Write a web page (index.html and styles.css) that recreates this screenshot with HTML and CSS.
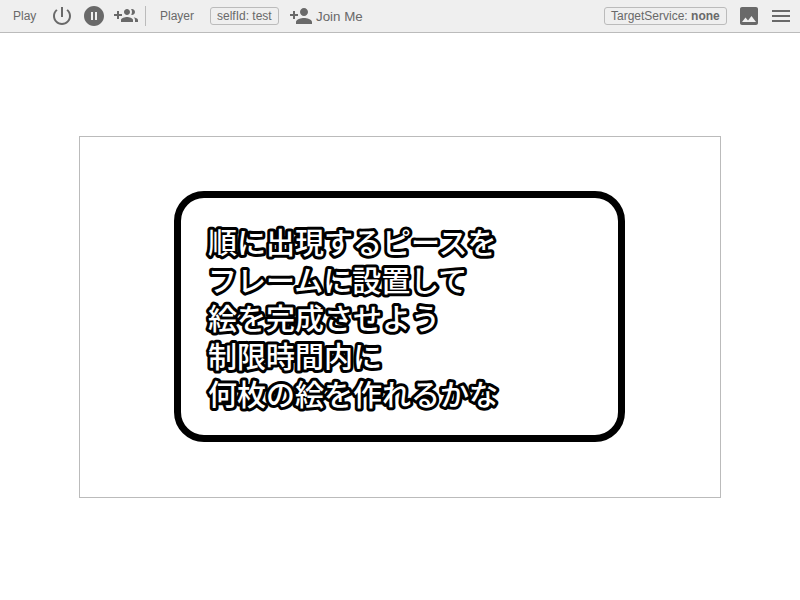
FILE: index.html
```html
<!DOCTYPE html>
<html lang="ja">
<head>
<meta charset="utf-8">
<title>Play</title>
<link rel="stylesheet" href="styles.css">
</head>
<body>
<header class="toolbar">
  <span class="label label-play">Play</span>
  <svg class="icon icon-power" viewBox="0 0 24 24"><path d="M13 3h-2v10h2V3zm4.83 2.17l-1.42 1.42C17.99 7.86 19 9.81 19 12c0 3.87-3.13 7-7 7s-7-3.13-7-7c0-2.19 1.01-4.14 2.58-5.42L6.17 5.17C4.23 6.82 3 9.26 3 12c0 4.97 4.03 9 9 9s9-4.03 9-9c0-2.74-1.23-5.18-3.17-6.83z"/></svg>
  <svg class="icon icon-pause" viewBox="0 0 24 24"><path d="M12 2C6.48 2 2 6.48 2 12s4.48 10 10 10 10-4.48 10-10S17.52 2 12 2zm-1 14H9V8h2v8zm4 0h-2V8h2v8z"/></svg>
  <svg class="icon icon-group" viewBox="0 0 24 24"><path d="M8 10H5V7H3v3H0v2h3v3h2v-3h3v-2zm10 1c1.66 0 2.99-1.34 2.99-3S19.66 5 18 5c-.32 0-.63.05-.91.14.57.81.9 1.79.9 2.86s-.34 2.04-.9 2.86c.28.09.59.14.91.14zm-5 0c1.66 0 2.99-1.34 2.99-3S14.66 5 13 5c-1.66 0-3 1.34-3 3s1.34 3 3 3zm6.62 2.16c.83.73 1.38 1.66 1.38 2.84v2h3v-2c0-1.54-2.37-2.49-4.38-2.84zM13 13c-2 0-6 1-6 3v2h12v-2c0-2-4-3-6-3z"/></svg>
  <span class="divider"></span>
  <span class="label label-player">Player</span>
  <span class="tag tag-self">selfId: test</span>
  <button class="join" type="button">
    <svg class="icon" viewBox="0 0 24 24"><path d="M15 12c2.21 0 4-1.79 4-4s-1.79-4-4-4-4 1.79-4 4 1.79 4 4 4zm-9-2V7H4v3H1v2h3v3h2v-3h3v-2H6zm9 4c-2.67 0-8 1.34-8 4v2h16v-2c0-2.66-5.33-4-8-4z"/></svg>
    <span class="join-text">Join Me</span>
  </button>
  <div class="right">
    <span class="tag tag-service">TargetService: <b>none</b></span>
    <svg class="icon icon-image" viewBox="0 0 24 24"><path d="M21 19V5c0-1.100-.9-2-2-2H5c-1.100 0-2 .9-2 2v14c0 1.100.9 2 2 2h14c1.100 0 2-.9 2-2zM8.500 13.500l2.500 3.010L14.500 12l4.500 6H5l3.500-4.500z"/></svg>
    <svg class="icon" viewBox="0 0 24 24"><path d="M3 18h18v-2H3v2zm0-5h18v-2H3v2zm0-7v2h18V6H3z"/></svg>
  </div>
</header>
<main class="stage">
  <div class="screen">
    <div class="panel">
      <svg class="message" viewBox="0 0 320 200">
        <text x="5" y="34">順に出現するピースを</text>
        <text x="5" y="72">フレームに設置して</text>
        <text x="5" y="110">絵を完成させよう</text>
        <text x="5" y="148">制限時間内に</text>
        <text x="5" y="186">何枚の絵を作れるかな</text>
      </svg>
    </div>
  </div>
</main>
</body>
</html>
```
FILE: styles.css
```css
* {
  box-sizing: border-box;
}

body {
  margin: 0;
  height: 100vh;
  display: flex;
  flex-direction: column;
  overflow: hidden;
  background: #fff;
  color: #696969;
  font: 12px/16px "Liberation Sans", Arial, sans-serif;
}

.toolbar {
  flex: none;
  display: flex;
  align-items: center;
  height: 33px;
  padding: 0 7px 1px 13px;
  border-bottom: 1px solid #bbb;
  background: #efefef;
  white-space: nowrap;
}

.icon {
  flex: none;
  display: block;
  width: 24px;
  height: 24px;
  fill: #696969;
}

.label-play {
  width: 37px;
}

.icon-pause,
.icon-group {
  margin-left: 8px;
}

.icon-group {
  margin-right: 7px;
}

.divider {
  width: 1px;
  height: 20px;
  background: #bbb;
}

.label-player {
  width: 50px;
  margin-left: 14px;
}

.tag {
  height: 18px;
  padding: 0 6px;
  border: 1px solid #bbb;
  border-radius: 3px;
}

.tag-self {
  width: 69px;
}

.join {
  display: flex;
  align-items: center;
  margin-left: 10px;
  padding: 0;
  border: 0;
  background: none;
  color: inherit;
  font: 13.333px/16px "Liberation Sans", Arial, sans-serif;
}

.join-text {
  margin-left: 3px;
  padding-top: 2px;
}

.right {
  display: flex;
  align-items: center;
  margin-left: auto;
}

.tag-service {
  width: 123px;
}

.icon-image {
  margin: 0 8px 0 10px;
}

.stage {
  flex: 1;
  display: flex;
  align-items: center;
  justify-content: center;
  padding-top: 1px;
}

.screen {
  display: flex;
  align-items: center;
  justify-content: center;
  width: 642px;
  height: 362px;
  padding: 0 1px 1px 0;
  border: 1px solid #bbb;
}

.panel {
  width: 451px;
  height: 251px;
  padding: 22px 0 0 22px;
  border: 7px solid #000;
  border-radius: 30px;
}

.message {
  display: block;
  width: 320px;
  height: 200px;
  fill: #fff;
  stroke: #000;
  stroke-width: 6px;
  stroke-linejoin: round;
  paint-order: stroke fill;
  font: 500 29px "Noto Sans CJK JP", sans-serif;
}
```
